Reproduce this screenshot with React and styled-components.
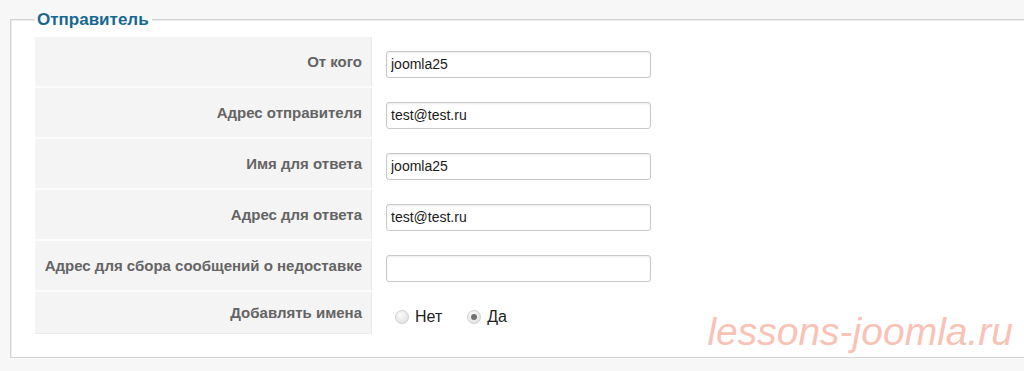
import React from 'react'
import styled, { createGlobalStyle } from 'styled-components'

const Global = createGlobalStyle`
  html, body {
    margin: 0;
    padding: 0;
    background: #f7f7f7;
    overflow: hidden;
    font-family: "Liberation Sans", Arial, sans-serif;
  }
`

const Page = styled.div`
  position: relative;
  height: 371px;
  padding-top: 10px;
  box-sizing: border-box;
`

const Fieldset = styled.fieldset`
  margin: 0 0 0 10px;
  width: calc(100% + 20px);
  box-sizing: border-box;
  background: #fff;
  border: 1px solid #d4d4d4;
  box-shadow: inset 1px 1px 0 #ededed;
  padding: 8px 0 23px 24px;
`

const Legend = styled.legend`
  padding: 0 3px 0 2px;
  font-size: 17px;
  line-height: 19px;
  font-weight: bold;
  color: #176891;
  background: linear-gradient(#f7f7f7 50%, #fff 50%);
`

const Table = styled.div`
  display: grid;
  grid-template-columns: 337px 1fr;
`

const Label = styled.div`
  height: ${(p) => p.h}px;
  box-sizing: border-box;
  display: flex;
  align-items: center;
  justify-content: flex-end;
  padding-right: 10px;
  background: #f4f4f4;
  border-bottom: ${(p) => (p.last ? '1px solid #ececec' : '2px solid #fbfbfb')};
  box-shadow: inset -1px 0 0 #e9e9e9;
  font-size: 15px;
  font-weight: bold;
  color: #646464;
  white-space: nowrap;
`

const Field = styled.div`
  display: flex;
  align-items: center;
  padding: 3px 0 0 14px;
  height: ${(p) => p.h}px;
  box-sizing: border-box;
`

const Input = styled.input`
  width: 265px;
  height: 27px;
  box-sizing: border-box;
  border: 1px solid #c9c9c9;
  border-radius: 3px;
  box-shadow: inset 0 1px 2px rgba(0, 0, 0, 0.08);
  padding: 0 4px;
  font-family: "Liberation Sans", Arial, sans-serif;
  font-size: 14px;
  color: #1a1a1a;
  background: #fff;
  outline: none;
`

const Radios = styled.div`
  display: flex;
  align-items: center;
  gap: 25px;
  padding: 4px 0 0 9px;
`

const Option = styled.label`
  display: flex;
  align-items: center;
  gap: 6px;
  font-size: 16px;
  color: #222;
`

const Dot = styled.span`
  width: 14px;
  height: 14px;
  box-sizing: border-box;
  border-radius: 50%;
  border: 1px solid #d0d0d0;
  background: radial-gradient(circle at 40% 35%, #fbfbfb, #dcdcdc);
  display: flex;
  align-items: center;
  justify-content: center;
  &::after {
    content: '';
    width: 6px;
    height: 6px;
    border-radius: 50%;
    background: ${(p) => (p.checked ? '#707070' : 'transparent')};
  }
`

const Watermark = styled.div`
  position: absolute;
  right: 11px;
  top: 310px;
  font-size: 39px;
  font-style: italic;
  color: #f9c2b6;
`

const rows = [
  { label: 'От кого', value: 'joomla25' },
  { label: 'Адрес отправителя', value: 'test@test.ru' },
  { label: 'Имя для ответа', value: 'joomla25' },
  { label: 'Адрес для ответа', value: 'test@test.ru' },
  { label: 'Адрес для сбора сообщений о недоставке', value: '' },
]

export default function App() {
  return (
    <Page>
      <Global />
      <Fieldset>
        <Legend>Отправитель</Legend>
        <Table>
          {rows.map((r) => (
            <React.Fragment key={r.label}>
              <Label h={51}>{r.label}</Label>
              <Field h={51}>
                <Input defaultValue={r.value} />
              </Field>
            </React.Fragment>
          ))}
          <Label h={42} last>Добавлять имена</Label>
          <Field h={42}>
            <Radios>
              <Option>
                <Dot />
                Нет
              </Option>
              <Option>
                <Dot checked />
                Да
              </Option>
            </Radios>
          </Field>
        </Table>
      </Fieldset>
      <Watermark>lessons-joomla.ru</Watermark>
    </Page>
  )
}
